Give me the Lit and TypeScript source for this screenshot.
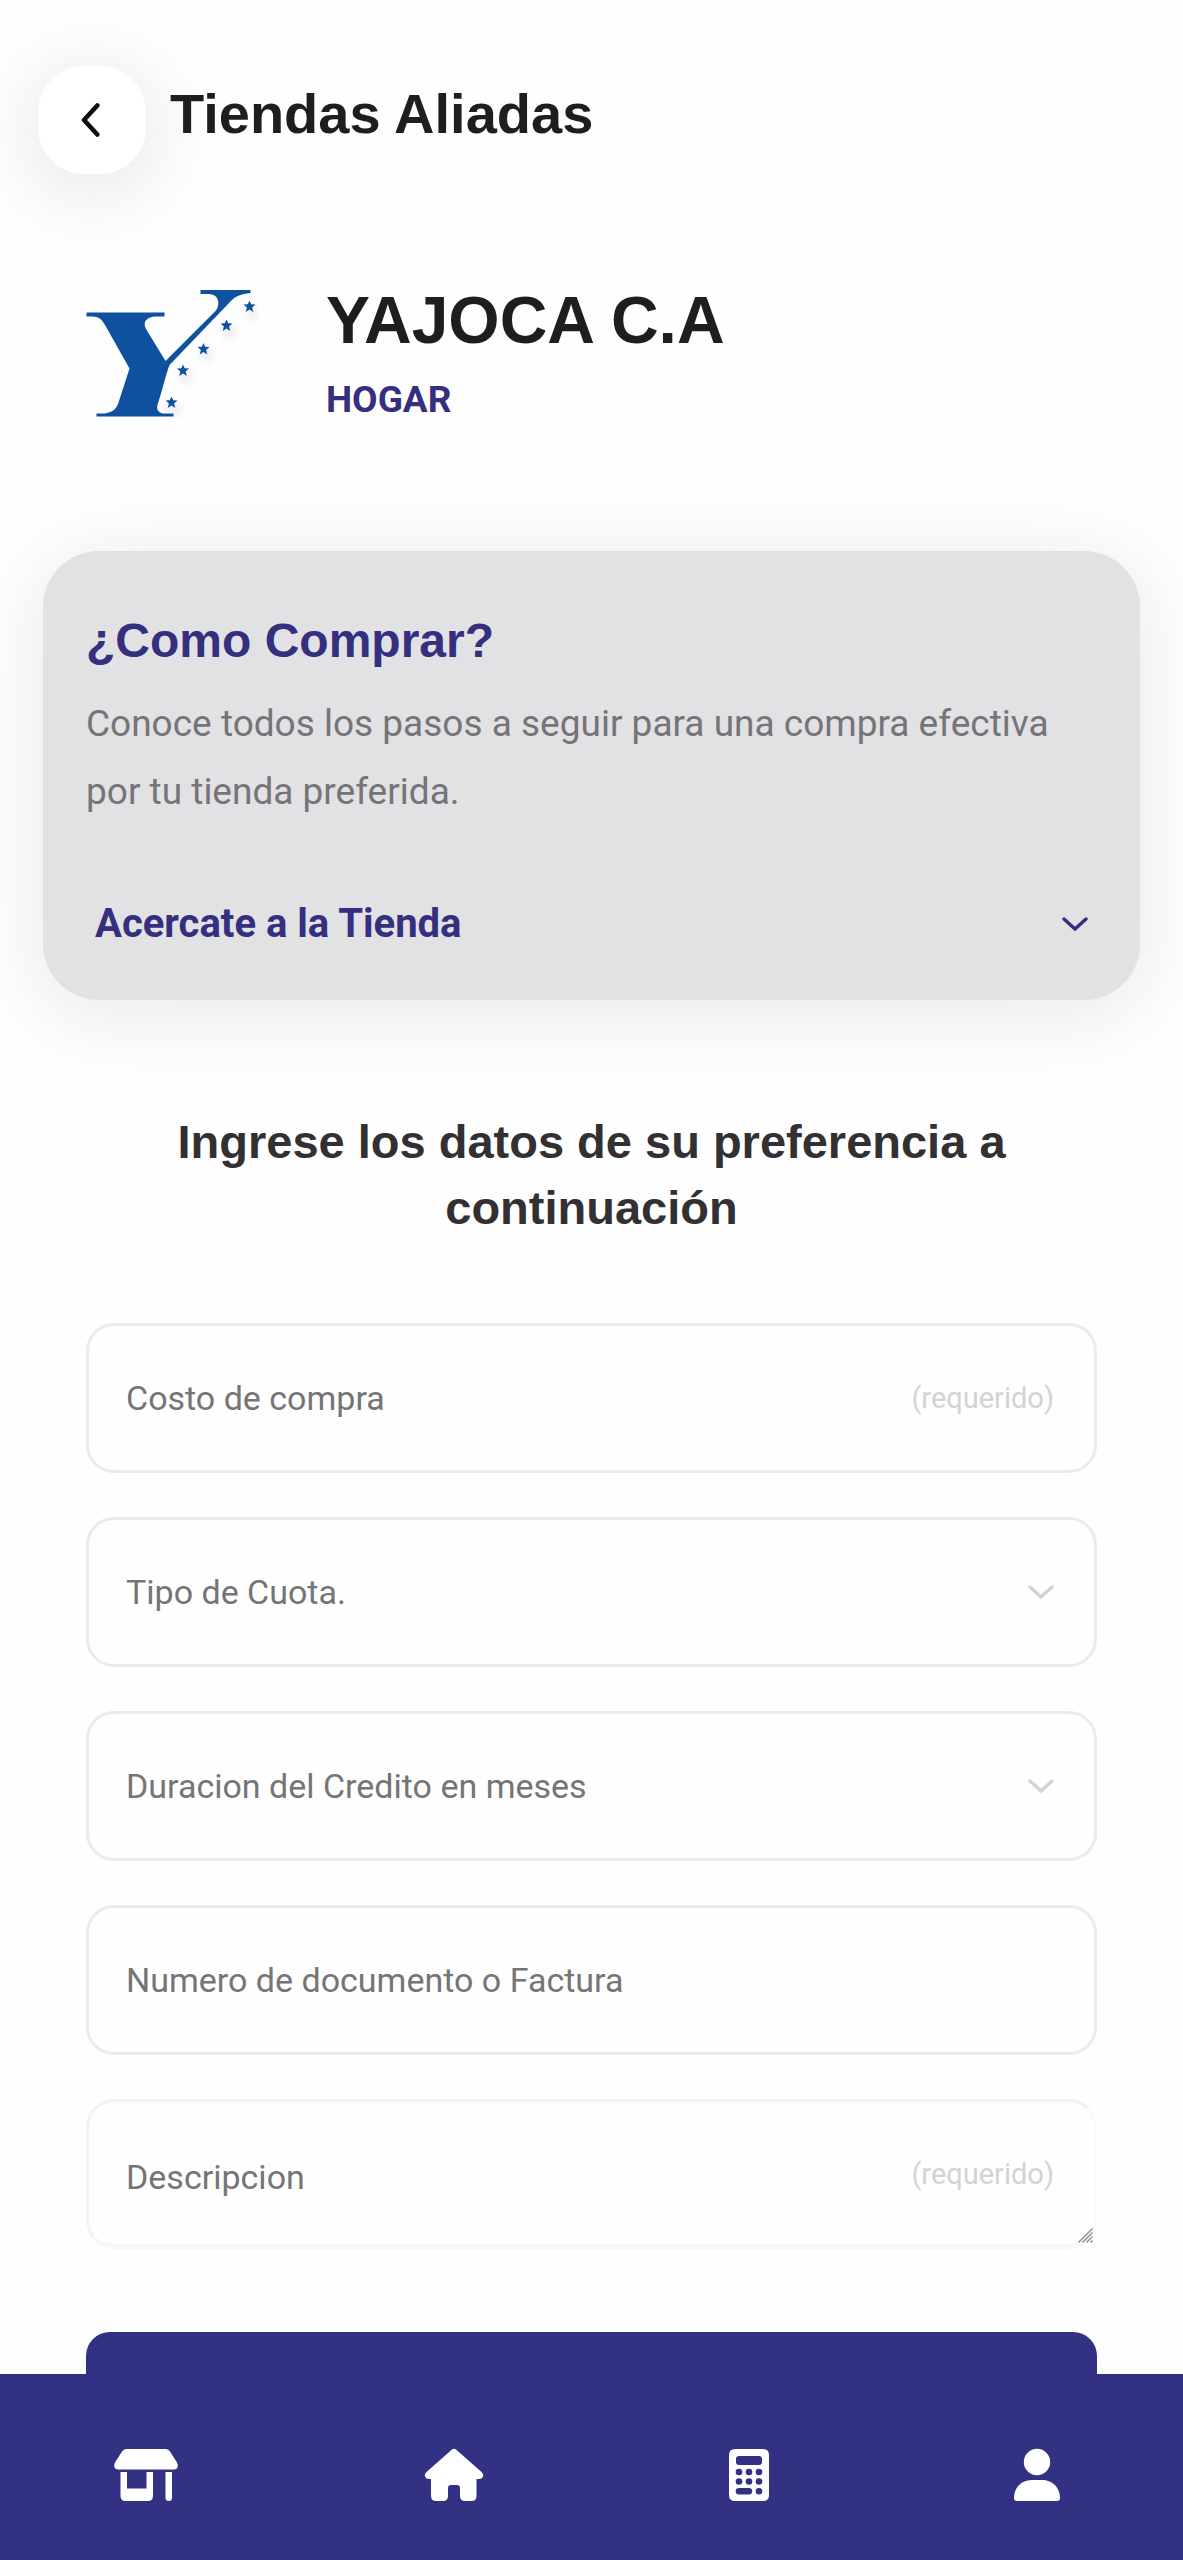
import { LitElement, html, css, svg } from "lit";
import { customElement } from "lit/decorators.js";

const STAR = "M0 -6 L1.7 -2.2 L6 -2 L2.6 1 L3.8 5.400 L0 3 L-3.8 5.400 L-2.6 1 L-6 -2 L-1.7 -2.2 Z";
const STARS = [[163.500, 16.500], [140.500, 35.500], [117.500, 59], [97, 80.500], [85.500, 112.500]];

const chevron = html`<svg class="chevron" viewBox="0 0 26 14" aria-hidden="true">
  <path d="M2 2 L13 12 L24 2" fill="none" stroke="currentColor" stroke-width="3.4" stroke-linecap="round"/>
</svg>`;

@customElement("app-root")
export class AppRoot extends LitElement {
  static styles = css`
    :host {
      display: block;
      background: #fefefe;
      color: #1f1d20;
      font-family: Roboto, "Liberation Sans", sans-serif;
    }
    * { box-sizing: border-box; margin: 0; }
    svg { display: block; }
    .page {
      height: 100vh;
      display: flex;
      flex-direction: column;
    }
    .content {
      flex: 1;
      min-height: 0;
      overflow: hidden;
    }
    .top {
      display: flex;
      align-items: center;
      gap: 24px;
      padding: 66px 38px 0;
    }
    .back {
      width: 108px;
      height: 108px;
      border: 0;
      border-radius: 46px;
      background: #fff;
      color: #0c0c0c;
      display: grid;
      place-items: center;
      box-shadow: 0 12px 80px rgba(40, 30, 60, 0.13);
    }
    .back svg { width: 24px; height: 34px; }
    .title, .name, .how-title, .lead {
      font-family: "Liberation Sans", Arial, sans-serif;
      font-weight: 700;
    }
    .title { font-size: 56px; line-height: 64px; padding-bottom: 12px; }
    .store {
      display: flex;
      gap: 68px;
      padding: 106px 86px 0;
    }
    .logo { width: 172px; height: 148px; }
    .name { font-size: 66px; line-height: 80px; }
    .kind { font-size: 37px; line-height: 44px; font-weight: 700; color: #352f80; margin-top: 18px; }
    .how {
      margin: 123px 43px 0;
      padding: 58px 43px 36px;
      border-radius: 56px;
      background: #e2e1e4;
      box-shadow: 0 12px 80px rgba(40, 30, 60, 0.1);
    }
    .how-title { font-size: 48px; line-height: 64px; color: #352f80; }
    .how-text { font-size: 37px; line-height: 68px; color: #757478; margin-top: 17px; }
    .toggle {
      display: flex;
      align-items: center;
      justify-content: space-between;
      width: 100%;
      margin-top: 58px;
      padding: 16px 9px;
      border: 0;
      background: none;
      color: #352f80;
      font: 700 40px/48px Roboto, sans-serif;
      text-align: left;
    }
    .chevron { width: 26px; height: 14px; flex: none; }
    .lead {
      font-size: 47px;
      line-height: 66px;
      color: #323033;
      text-align: center;
      padding: 109px 160px 0;
    }
    .form {
      display: grid;
      gap: 44px;
      padding: 82px 86px 0;
    }
    .field { position: relative; display: block; height: 150px; }
    .control {
      display: block;
      width: 100%;
      height: 150px;
      padding: 0 37px;
      border: 3px solid #ebebeb;
      border-radius: 28px;
      background: #fefefe;
      color: #757575;
      font: 400 34px/40px Roboto, sans-serif;
      appearance: none;
      outline: none;
    }
    .control::placeholder { color: #757575; opacity: 1; }
    .area {
      padding-top: 55px;
      border-color: #f3f3f3 #fafafa #f7f7f7 #f3f3f3;
      border-bottom-width: 5px;
      resize: none;
      overflow: hidden;
    }
    .grip {
      position: absolute;
      right: 4px;
      bottom: 6px;
      width: 15px;
      height: 15px;
    }
    .mark {
      position: absolute;
      right: 43px;
      top: 50%;
      transform: translateY(-50%);
      color: #d4d2d5;
      font-size: 29px;
      line-height: 40px;
      pointer-events: none;
    }
    .submit {
      height: 150px;
      margin-top: 39px;
      border: 0;
      border-radius: 24px;
      background: #323184;
      color: #fff;
      font: 700 36px/44px Roboto, sans-serif;
    }
    .nav {
      flex: none;
      display: flex;
      justify-content: space-between;
      padding: 74px 123px 58px 113px;
      background: #323184;
    }
    .nav a { color: #fff; display: block; }
    .nav svg { height: 54px; fill: currentColor; }
  `;

  render() {
    return html`<div class="page">
      <main class="content">
        <header class="top">
          <button class="back" type="button" aria-label="Volver">
            <svg viewBox="0 0 24 34" aria-hidden="true">
              <path d="M17.300 2.500 L4 17 L17.300 31.500" fill="none" stroke="currentColor" stroke-width="4.6" stroke-linecap="round" stroke-linejoin="round"/>
            </svg>
          </button>
          <h1 class="title">Tiendas Aliadas</h1>
        </header>

        <section class="store">
          <svg class="logo" viewBox="0 0 172 148" aria-hidden="true">
            <defs>
              <filter id="soft" x="-150%" y="-150%" width="400%" height="400%">
                <feDropShadow dx="3" dy="6" stdDeviation="5" flood-color="#000" flood-opacity="0.18"/>
              </filter>
            </defs>
            <g transform="translate(0 10)" fill="#0d519f">
              <path d="M0.500 22.500 H78.500 V26.500 H68 C59 28 57 33 60 39 L79.500 71 L130 20.500 C135 13 132 4 123 4 H114.500 V0 H164.500 V3 C155 4 149 6 144 12 L83.500 75 C80 84 77 98 73 110 C69 120 72 122 77 123.500 H87.500 V126.500 H10.500 V123.500 H19 C27 122 31 119 33 111 L43.500 78.500 L19 35 C15 28 12 27 7 26.500 H0.500 Z"/>
              ${STARS.map(([x, y]) => svg`<path d=${STAR} transform="translate(${x} ${y})" filter="url(#soft)"/>`)}
            </g>
          </svg>
          <div>
            <h2 class="name">YAJOCA C.A</h2>
            <p class="kind">HOGAR</p>
          </div>
        </section>

        <section class="how">
          <h2 class="how-title">¿Como Comprar?</h2>
          <p class="how-text">Conoce todos los pasos a seguir para una compra efectiva por tu tienda preferida.</p>
          <button class="toggle" type="button" aria-expanded="false">Acercate a la Tienda ${chevron}</button>
        </section>

        <h2 class="lead">Ingrese los datos de su preferencia a continuación</h2>

        <form class="form">
          <label class="field">
            <input class="control" type="text" placeholder="Costo de compra" required>
            <span class="mark">(requerido)</span>
          </label>
          <label class="field">
            <select class="control" aria-label="Tipo de Cuota"><option>Tipo de Cuota.</option></select>
            <span class="mark">${chevron}</span>
          </label>
          <label class="field">
            <select class="control" aria-label="Duracion del Credito"><option>Duracion del Credito en meses</option></select>
            <span class="mark">${chevron}</span>
          </label>
          <label class="field">
            <input class="control" type="text" placeholder="Numero de documento o Factura">
          </label>
          <label class="field">
            <textarea class="control area" placeholder="Descripcion" required></textarea>
            <span class="mark">(requerido)</span>
            <svg class="grip" viewBox="0 0 15 15" aria-hidden="true">
              <path d="M0.500 14.500 L14.500 0.500 M4.500 14.500 L14.500 4.500 M8.500 14.500 L14.500 8.500 M12.500 14.500 L14.500 12.500" fill="none" stroke="#8a8a8a" stroke-width="1.400"/>
            </svg>
          </label>
          <button class="submit" type="submit" aria-label="Enviar"></button>
        </form>
      </main>

      <nav class="nav">
        <a href="#tiendas" aria-label="Tiendas"><svg viewBox="0 0 66 54" width="66">
          <path d="M13 1 H53 Q55.500 1 57 3.500 L64 14.500 Q65.500 17 64.500 19.500 Q63.500 21.500 61 21.500 H5 Q2.500 21.500 1.500 19.500 Q0.500 17 2 14.500 L9 3.500 Q10.500 1 13 1 Z"/>
          <path d="M7.500 24 H14 V40.500 H33.500 V24 H40 V48 Q40 53 35 53 H12.500 Q7.500 53 7.500 48 Z"/>
          <path d="M52.500 24 H59 V50 Q59 53 55.800 53 Q52.500 53 52.500 50 Z"/>
        </svg></a>
        <a href="#inicio" aria-label="Inicio"><svg viewBox="0 0 60 54" width="60">
          <path d="M28 1.500 Q30 0 32 1.500 L57.500 24 Q60 26.500 59 28.500 Q58 31 55 31 H52.500 V48 Q52.500 53 47.500 53 H41 Q36 53 36 48 V40 Q36 37 33 37 H27 Q24 37 24 40 V48 Q24 53 19 53 H12 Q7 53 7 48 V31 H5 Q2 31 1 28.500 Q0 26.500 2.500 24 Z"/>
        </svg></a>
        <a href="#calculadora" aria-label="Calculadora"><svg viewBox="0 0 40 54" width="40">
          <path fill-rule="evenodd" d="M6 1 H34 Q40 1 40 7 V47 Q40 53 34 53 H6 Q0 53 0 47 V7 Q0 1 6 1 Z M10 8 Q7 8 7 11 V14 Q7 17 10 17 H30 Q33 17 33 14 V11 Q33 8 30 8 Z"/>
          <g fill="#323184">
            <circle cx="10" cy="24" r="3.300"/><circle cx="20" cy="24" r="3.300"/><circle cx="30" cy="24" r="3.300"/>
            <circle cx="10" cy="33.500" r="3.300"/><circle cx="20" cy="33.500" r="3.300"/><circle cx="30" cy="33.500" r="3.300"/>
            <rect x="6.700" y="40" width="16.500" height="6.600" rx="3.300"/><circle cx="30" cy="43.300" r="3.300"/>
          </g>
        </svg></a>
        <a href="#perfil" aria-label="Perfil"><svg viewBox="0 0 46 54" width="46">
          <circle cx="23" cy="14" r="13.200"/>
          <path d="M18 32 H28 C39 32 46 40 46 50 Q46 53 43 53 H3 Q0 53 0 50 C0 40 7 32 18 32 Z"/>
        </svg></a>
      </nav>
    </div>`;
  }
}
